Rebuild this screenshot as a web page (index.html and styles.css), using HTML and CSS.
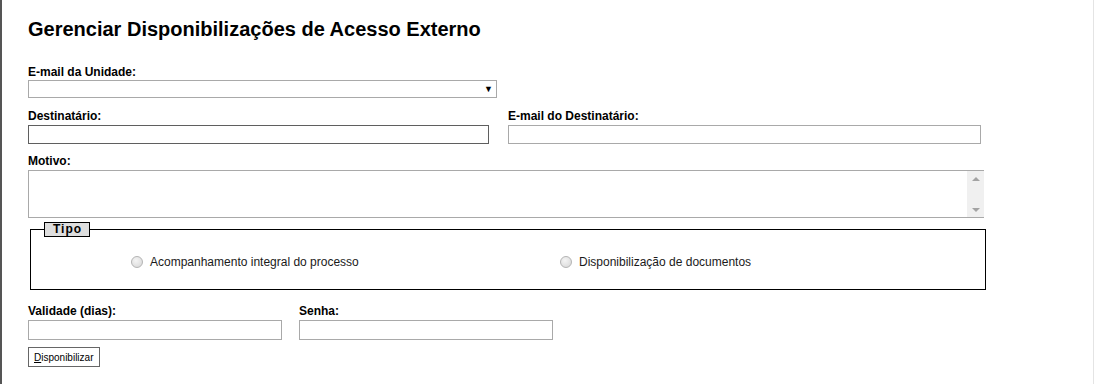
FILE: index.html
```html
<!DOCTYPE html>
<html lang="pt-BR">
<head>
    <meta charset="UTF-8">
    <meta name="viewport" content="width=device-width, initial-scale=1.0">
    <link rel="stylesheet" href="styles.css">
    <title>Gerenciar Disponibilizações de Acesso Externo</title>
</head>
<body>
    <div class="page">
        <h1 class="title">Gerenciar Disponibilizações de Acesso Externo</h1>
        <form class="form">
            <div class="field field-unidade">
                <label class="label" for="selEmailUnidade">E-mail da Unidade:</label>
                <div class="select-wrap">
                    <select class="select" id="selEmailUnidade"></select>
                    <span class="select-arrow">&#9660;</span>
                </div>
            </div>

            <div class="row row-dest">
                <div class="field">
                    <label class="label" for="txtDestinatario">Destinatário:</label>
                    <input class="input input-dark" type="text" id="txtDestinatario">
                </div>
                <div class="field">
                    <label class="label" for="txtEmailDestinatario">E-mail do Destinatário:</label>
                    <input class="input" type="text" id="txtEmailDestinatario">
                </div>
            </div>

            <div class="field field-motivo">
                <label class="label" for="txaMotivo">Motivo:</label>
                <div class="textarea-box">
                    <textarea class="textarea" id="txaMotivo"></textarea>
                    <div class="scrollbar">
                        <span class="scroll-up"></span>
                        <span class="scroll-down"></span>
                    </div>
                </div>
            </div>

            <fieldset class="tipo">
                <legend class="tipo-legend">Tipo</legend>
                <div class="tipo-options">
                    <label class="option">
                        <input class="radio" type="radio" name="rdoTipo">
                        <span>Acompanhamento integral do processo</span>
                    </label>
                    <label class="option">
                        <input class="radio" type="radio" name="rdoTipo">
                        <span>Disponibilização de documentos</span>
                    </label>
                </div>
            </fieldset>

            <div class="row row-validade">
                <div class="field">
                    <label class="label" for="txtDias">Validade (dias):</label>
                    <input class="input" type="text" id="txtDias">
                </div>
                <div class="field">
                    <label class="label" for="pwdSenha">Senha:</label>
                    <input class="input" type="password" id="pwdSenha">
                </div>
            </div>

            <button class="button" type="button"><u>D</u>isponibilizar</button>
        </form>
    </div>
</body>
</html>
```
FILE: styles.css
```css
html{
    box-sizing: border-box;
    font-family: "Liberation Sans", Arial, sans-serif;
    font-size: 12px;
}
*,
*:before,
*:after{
    box-sizing: inherit;
}
body{
    margin: 0;
    background-color: #fff;
}
.page{
    min-height: 384px;
    border-left: 2px solid #555;
    border-right: 1px solid #e4e4e4;
    padding: 17px 0 0 26px;
}
.title{
    margin: 0;
    font-size: 20px;
    line-height: 24px;
    font-weight: bold;
    color: #000;
}
.form{
    width: 958px;
}
.field{
    display: flex;
    flex-direction: column;
}
.label{
    font-weight: bold;
    font-size: 12px;
    line-height: 14px;
    color: #000;
    margin-bottom: 2px;
}
.field-unidade{
    margin-top: 24px;
    width: 469px;
}
.field-unidade .label{
    margin-bottom: 1px;
}
.select-wrap{
    position: relative;
    height: 18px;
}
.select{
    appearance: none;
    -webkit-appearance: none;
    width: 100%;
    height: 18px;
    margin: 0;
    border: 1px solid #a9a9a9;
    border-radius: 0;
    background-color: #fff;
}
.select-arrow{
    position: absolute;
    right: 4px;
    top: 3px;
    font-size: 9px;
    line-height: 12px;
    color: #000;
    pointer-events: none;
}
.input{
    margin: 0;
    height: 19px;
    border: 1px solid #a9a9a9;
    border-radius: 0;
    padding: 1px 2px;
    background-color: #fff;
    font-family: inherit;
    font-size: 12px;
}
.input-dark{
    border-color: #5f5f5f;
}
.row{
    display: flex;
}
.row-dest{
    margin-top: 11px;
    gap: 19px;
}
.row-dest .field:first-child{
    width: 461px;
}
.row-dest .field:last-child{
    width: 473px;
}
.field-motivo{
    margin-top: 10px;
}
.textarea-box{
    display: flex;
    width: 956px;
    height: 48px;
    border: 1px solid #a9a9a9;
    border-right: none;
}
.textarea{
    flex-grow: 1;
    margin: 0;
    border: none;
    padding: 2px;
    resize: none;
    font-family: inherit;
    font-size: 12px;
    outline: none;
}
.scrollbar{
    width: 17px;
    background-color: #f0f0f0;
    display: flex;
    flex-direction: column;
    justify-content: space-between;
    align-items: center;
    padding: 6px 0 5px;
}
.scroll-up,
.scroll-down{
    width: 0;
    height: 0;
    border-left: 4px solid transparent;
    border-right: 4px solid transparent;
}
.scroll-up{
    border-bottom: 4px solid #a3a3a3;
}
.scroll-down{
    border-top: 4px solid #a3a3a3;
}
.tipo{
    margin: 4px 0 0 2px;
    width: 956px;
    border: 1px solid #000;
    padding: 17px 0 19px 0;
    min-width: 0;
}
.tipo-legend{
    margin-left: 13px;
    padding: 0 7px 0 8px;
    height: 15px;
    line-height: 13px;
    border: 1px solid #000;
    background-color: #dedede;
    font-weight: bold;
    font-size: 12px;
    letter-spacing: 1px;
    color: #000;
}
.tipo-options{
    display: grid;
    grid-template-columns: 429px 1fr;
    padding-left: 100px;
}
.option{
    display: flex;
    align-items: center;
    gap: 7px;
    height: 16px;
    font-size: 12px;
    color: #1a1a1a;
}
.radio{
    appearance: none;
    -webkit-appearance: none;
    margin: 0;
    width: 12px;
    height: 12px;
    border: 1px solid #b4b4b4;
    border-radius: 50%;
    background: radial-gradient(circle at 40% 35%, #f4f4f4, #d6d6d6);
}
.row-validade{
    margin-top: 14px;
    gap: 17px;
}
.row-validade .field{
    width: 254px;
}
.row-validade .input{
    height: 20px;
}
.button{
    display: block;
    margin-top: 7px;
    height: 20px;
    padding: 0 6px 0 5px;
    border: 1px solid #666;
    border-radius: 0;
    background-color: #fff;
    font-family: inherit;
    font-size: 10px;
    color: #000;
}
```
